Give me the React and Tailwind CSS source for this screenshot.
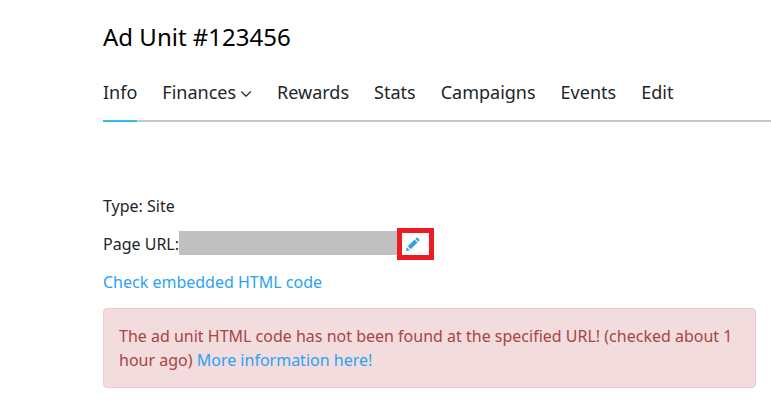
import React from "react";
import { ChevronDown } from "lucide-react";

const tabs = ["Info", "Finances", "Rewards", "Stats", "Campaigns", "Events", "Edit"];

const Pencil = () => (
  <svg width="15" height="15" viewBox="0 0 16 16" fill="#2ba3f3">
    <path d="M1 15l1-4.2 3.2 3.2z" />
    <path d="M3 9.9l7.2-7.2 3.1 3.1-7.2 7.2z" />
    <path d="M11 1.9l1-1a1 1 0 0 1 1.4 0l1.7 1.7a1 1 0 0 1 0 1.4l-1 1z" />
  </svg>
);

export default function App() {
  return (
    <div className="h-[408px] w-[771px] overflow-hidden bg-white pl-[103px] font-['Noto_Sans',sans-serif] text-[#212529]">
      <h1 className="pt-[20px] text-[24px] leading-[33px] text-black">Ad Unit #123456</h1>

      <div className="mt-[23px] flex h-[46px] gap-[25px] border-b-2 border-[#c8c8c8]">
        {tabs.map((t, i) => (
          <div
            key={t}
            className={
              i === 0
                ? "-mb-[2px] flex h-[46px] items-start border-b-2 border-[#2fc0ee] pt-[4px] text-[18px] leading-[25px]"
                : "flex items-start pt-[4px] text-[18px] leading-[25px]"
            }
          >
            {t}
            {t === "Finances" && <ChevronDown size={18} strokeWidth={1.5} className="ml-[1px] -mr-[3px] mt-[5px]" />}
          </div>
        ))}
      </div>

      <p className="mt-[72px] text-[16px] leading-[24px]">Type: Site</p>

      <div className="mt-[13px] flex h-[30px] items-start text-[16px] leading-[24px]">
        <span className="mt-[1px]">Page URL:</span>
        <span className="h-[24px] w-[218px] bg-[#c0c0c0]"></span>
        <span className="-mt-[3px] flex h-[32px] w-[37px] items-center border-[5px] border-[#ed1c24] pl-[3px]">
          <Pencil />
        </span>
      </div>

      <p className="mt-[9px] text-[16px] leading-[24px] text-[#2ba3f3]">Check embedded HTML code</p>

      <div className="mt-[14px] h-[80px] w-[653px] rounded border border-[#f0c8ce] bg-[#f2dcde] px-[15px] pt-[15px] text-[16px] leading-[24px] text-[#a94442]">
        The ad unit HTML code has not been found at the specified URL! (checked about 1 hour ago){" "}
        <span className="text-[#2ba3f3]">More information here!</span>
      </div>
    </div>
  );
}
